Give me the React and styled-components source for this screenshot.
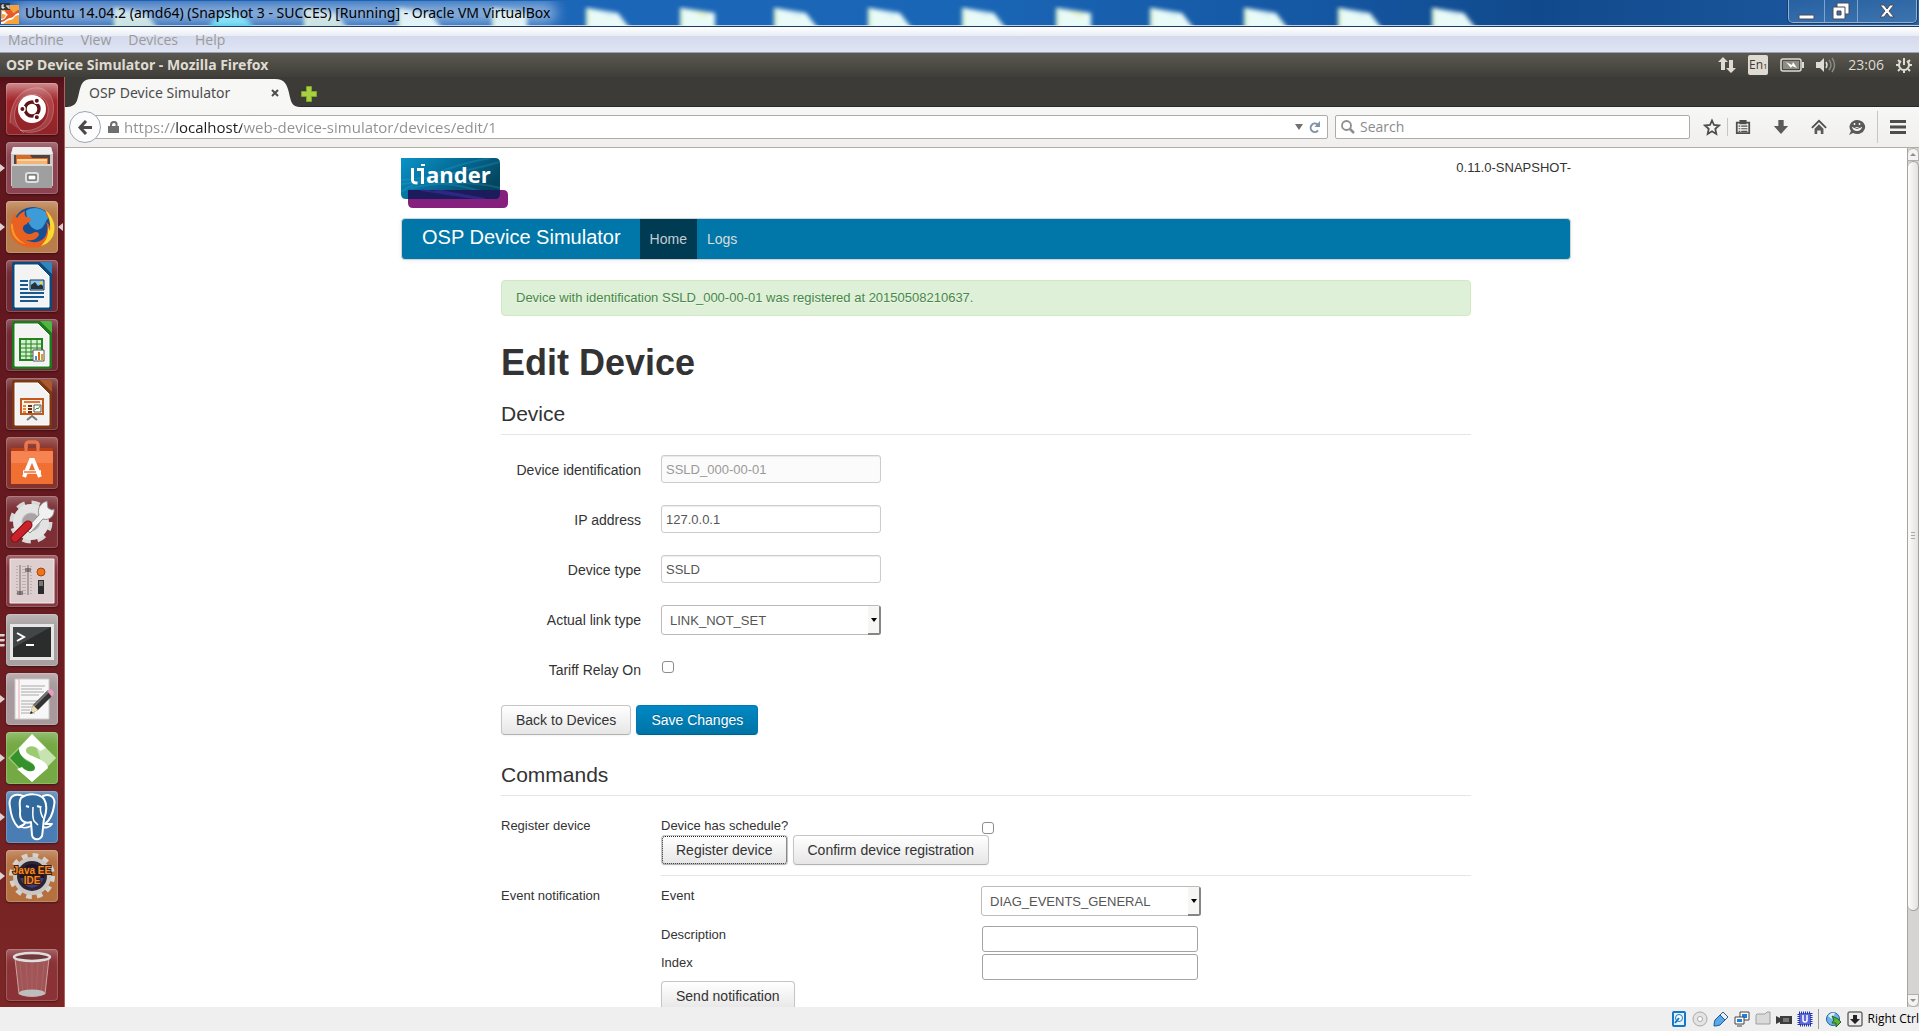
import React from "react";
import styled, { createGlobalStyle, css } from "styled-components";

const ui = '"Open Sans", "Noto Sans", sans-serif';
const uiWide = '"Noto Sans", "Open Sans", sans-serif';
const web = '"Liberation Sans", Arial, sans-serif';

const GlobalStyle = createGlobalStyle`
  *, *::before, *::after { box-sizing: border-box; }
  body { margin: 0; background: #fff; color: #333; font-family: ${web}; overflow: hidden; }
  button, input, select { font-family: inherit; margin: 0; }
  svg { display: block; flex: none; }
`;

/* ---------- host window ---------- */

const Desktop = styled.div`
  display: flex;
  flex-direction: column;
  height: 100vh;
`;

const TitleBar = styled.header`
  position: relative;
  display: flex;
  align-items: center;
  height: 27px;
  overflow: hidden;
  border-bottom: 1px solid #1b3a66;
  box-shadow: inset 0 -1px 0 #b9cfe6;
  background: linear-gradient(90deg, #1d5cb0 0%, #1c66b8 30%, #1a66b6 50%, #1558a4 68%, #114a8c 80%, #1a549a 93%, #2a629f 100%);
`;

const Wallpaper = styled.svg`
  position: absolute;
  left: 0;
  top: 0;
`;

const WindowTitle = styled.h1`
  position: relative;
  flex: 1;
  display: flex;
  align-items: center;
  gap: 5px;
  margin: 0;
  font: 400 14px/26px ${uiWide};
  color: #000;
`;

const WindowButtons = styled.div`
  position: relative;
  align-self: flex-start;
  display: flex;
  height: 23px;
  margin-right: 2px;
  border: 1px solid #8fb0d4;
  border-top: 0;
  border-radius: 0 0 5px 5px;
  box-shadow: 0 0 0 1px #173e6e;
`;

const WindowButton = styled.button`
  width: ${(p) => p.$width}px;
  display: grid;
  place-items: center;
  padding: 0;
  border: 0;
  background: linear-gradient(#3b73ae66, #5a8fc466);
  & + & { border-left: 1px solid #7fa3cb; }
`;

const MenuBar = styled.nav`
  display: flex;
  gap: 17px;
  height: 26px;
  padding-left: 8px;
  font: 14px/26px ${ui};
  border-bottom: 1px solid #9aa4b8;
  background: linear-gradient(#fff 0, #e8ecf5 9px, #d4daec 9px, #e0e5f5 100%);
`;

const MenuLink = styled.a`
  color: #9a9a9a;
  text-decoration: none;
`;

const StatusBar = styled.footer`
  display: flex;
  align-items: center;
  justify-content: flex-end;
  height: 24px;
  gap: 5px;
  background: #efefef;
  font: 12px/24px ${ui};
  color: #000;
`;

const StatusDivider = styled.i`
  width: 1px;
  height: 20px;
  margin-right: 2px;
  background: #9b9b9b;
`;

const HostKey = styled.span`
  white-space: nowrap;
`;

/* ---------- Ubuntu shell ---------- */

const Panel = styled.div`
  display: flex;
  align-items: center;
  justify-content: space-between;
  height: 24px;
  padding: 0 7px 0 6px;
  background: linear-gradient(#5b5850, #3f3e39);
  color: #dfdbd2;
  font: 14px/24px ${ui};
`;

const PanelTitle = styled.strong`
  font-family: ${uiWide};
  font-weight: 700;
`;

const Indicators = styled.div`
  display: flex;
  align-items: center;
  gap: 12px;
`;

const Layout = styled.span`
  display: flex;
  align-items: baseline;
  justify-content: center;
  width: 20px;
  height: 20px;
  border-radius: 2px;
  background: #dfdbd2;
  color: #3c3b37;
  font-size: 12px;
  line-height: 20px;
  small { font-size: 8px; }
`;

const Workspace = styled.div`
  flex: 1;
  min-height: 0;
  display: grid;
  grid-template-columns: 65px minmax(0, 1fr);
`;

const Launcher = styled.nav`
  display: flex;
  flex-direction: column;
  gap: 7px;
  padding: 6px 0;
  border-right: 1px solid #b0625c;
  background: linear-gradient(#531017 0, #5f161d 12px, #661a20 50%, #7c2626);
`;

const LauncherItem = styled.a`
  display: flex;
  align-items: center;
  height: 52px;
  &:last-child { margin-top: auto; }
`;

const Marker = styled.span`
  flex: 0 0 6px;
  display: grid;
  gap: 2px;
`;

const Pip = styled.i`
  height: ${(p) => (p.$small ? 3 : 8)}px;
  width: 5px;
  background: #dcd2d2;
  clip-path: ${(p) => (p.$left ? "polygon(100% 0, 0 50%, 100% 100%)" : p.$small ? "polygon(0 0, 80% 0, 100% 50%, 80% 100%, 0 100%)" : "polygon(0 0, 100% 50%, 0 100%)")};
`;

const Tile = styled.span`
  width: 52px;
  height: 52px;
  border-radius: 4px;
  overflow: hidden;
  background: ${(p) => p.$tone};
  box-shadow: inset 0 0 0 1px #ffffff30, inset 0 12px 12px -8px #ffffff50, 0 1px 2px #0006;
`;

/* ---------- Firefox ---------- */

const Browser = styled.main`
  min-width: 0;
  min-height: 0;
  display: flex;
  flex-direction: column;
`;

const TabStrip = styled.div`
  display: flex;
  align-items: flex-end;
  height: 30px;
  background: #3c3b37;
  border-bottom: 1px solid #2a2927;
`;

const Tab = styled.div`
  display: grid;
  grid-template-columns: minmax(0, 1fr);
  width: 236px;
  height: 28px;
  margin-bottom: -1px;
  > * { grid-area: 1 / 1; }
`;

const TabLabel = styled.div`
  display: flex;
  align-items: center;
  justify-content: space-between;
  padding: 0 22px 0 24px;
  font: 14px/24px ${uiWide};
  color: #4c4c4c;
`;

const IconButton = styled.button`
  display: grid;
  place-items: center;
  width: ${(p) => p.$width || 24}px;
  height: 24px;
  padding: 0;
  border: 0;
  background: none;
`;

const Toolbar = styled.div`
  display: flex;
  align-items: center;
  height: 41px;
  padding: 0 9px 0 4px;
  background: linear-gradient(#f7f7f6, #f0efed);
  border-bottom: 1px solid #b2aea5;
  font: 14px/22px ${ui};
`;

const BackButton = styled.button`
  position: relative;
  z-index: 1;
  display: grid;
  place-items: center;
  width: 32px;
  height: 32px;
  padding: 0;
  border: 1px solid #9aa5b3;
  border-radius: 50%;
  background: #fcfcfc;
`;

const Field = styled.label`
  display: flex;
  align-items: center;
  height: 24px;
  border: 1px solid #adaca8;
  border-radius: 2px;
  background: #fff;
`;

const AddressField = styled(Field)`
  flex: 1;
  margin-left: -14px;
  padding: 0 4px 0 20px;
`;

const SearchField = styled(Field)`
  flex: 0 0 355px;
  margin: 0 10px 0 7px;
  padding-left: 5px;
`;

const AddressInput = styled.input`
  flex: 1;
  min-width: 0;
  margin-left: 5px;
  padding: 0;
  border: 0;
  outline: 0;
  font-size: 15px;
  font-family: inherit;
  color: transparent;
  background: linear-gradient(90deg, #8f8f8f 51px, #1d1d1d 51px, #1d1d1d 118px, #8f8f8f 118px);
  background-clip: text;
  -webkit-background-clip: text;
`;

const SearchInput = styled.input`
  flex: 1;
  min-width: 0;
  padding: 0 5px;
  border: 0;
  outline: 0;
  background: none;
  font: inherit;
  &::placeholder { color: #8b8b8b; opacity: 1; }
`;

const ToolGroup = styled.div`
  display: flex;
  align-items: center;
  gap: ${(p) => p.$gap}px;
`;

const ToolDivider = styled.i`
  width: 1px;
  height: ${(p) => p.$height}px;
  background: #c4c6c9;
`;

const Viewport = styled.div`
  flex: 1;
  min-height: 0;
  display: grid;
  grid-template-columns: minmax(0, 1fr) 12px;
`;

const Page = styled.div`
  overflow: hidden;
  background: #fff;
  font: 13px/20px ${web};
`;

const ScrollBar = styled.div`
  display: flex;
  flex-direction: column;
  align-items: center;
  background: #d5d4d2;
  border-left: 1px solid #a5a4a1;
`;

const ScrollStep = styled.span`
  display: grid;
  place-items: center;
  width: 100%;
  height: 13px;
  background: #f4f3f2;
  border: 1px solid #b0afac;
  border-left: 0;
  border-radius: ${(p) => (p.$down ? "0 0 6px 6px" : "6px 6px 0 0")};
`;

const ScrollTrack = styled.div`
  flex: 1;
  width: 100%;
`;

const ScrollThumb = styled.div`
  display: grid;
  place-content: center;
  gap: 2px;
  height: 90%;
  border: 1px solid #a3a29f;
  border-left: 0;
  border-radius: 6px;
  background: linear-gradient(90deg, #fbfbfb, #e3e2e0);
  i { width: 4px; height: 1px; background: #a9a8a5; }
`;

/* ---------- web page ---------- */

const Container = styled.div`
  width: 1170px;
  max-width: 100%;
  margin: 0 auto;
`;

const Masthead = styled.div`
  display: flex;
  justify-content: space-between;
  height: 70px;
  padding-top: 10px;
`;

const Version = styled.span`
  line-height: 20px;
`;

const NavBar = styled.nav`
  display: flex;
  height: 42px;
  border: 1px solid #d4d4d4;
  border-radius: 4px;
  background: #0077a8;
  box-shadow: 0 1px 4px #00000011;
`;

const Brand = styled.a`
  padding: 0 19px 0 20px;
  font-size: 20px;
  line-height: 36px;
  color: #fff;
  text-decoration: none;
`;

const NavLink = styled.a`
  padding: 0 10px;
  font-size: 14px;
  line-height: 40px;
  text-decoration: none;
  color: #dcdcdc;
  ${(p) => p.$active && css`
    color: #c3cdd2;
    background: #003b54;
  `}
`;

const Content = styled.div`
  margin: 20px 100px 0;
`;

const Alert = styled.p`
  margin: 0 0 27px;
  padding: 7px 14px;
  border: 1px solid #d0e9c0;
  border-radius: 4px;
  background: #dff0d8;
  color: #468847;
  text-shadow: 0 1px 0 #ffffff80;
`;

const Heading = styled.h1`
  margin: 0 0 11px;
  font-size: 36px;
  line-height: 40px;
  color: #333;
`;

const Section = styled.section`
  margin-bottom: 20px;
`;

const Legend = styled.h2`
  margin: 0 0 20px;
  border-bottom: 1px solid #e5e5e5;
  font-size: 21px;
  font-weight: 400;
  line-height: 40px;
`;

const FormRow = styled.div`
  display: grid;
  grid-template-columns: 140px auto;
  justify-content: start;
  align-items: start;
  column-gap: 20px;
  height: 30px;
  margin-bottom: 20px;
`;

const RowLabel = styled.label`
  padding-top: 5px;
  text-align: right;
  font-size: 14px;
`;

const TextInput = styled.input`
  width: 220px;
  height: 28px;
  padding: 0 4px;
  border: 1px solid #ccc;
  border-radius: 3px;
  background: #fff;
  color: #555;
  font-size: 13px;
  box-shadow: inset 0 1px 1px #00000013;
  &:disabled { background: #fbfbfb; color: #999; }
`;

const PlainInput = styled.input`
  width: 216px;
  height: 26px;
  margin: 1px;
  padding: 0 4px;
  border: 1px solid #a5a39f;
  border-radius: 3px;
  background: #fff;
`;

const SelectBox = styled.span`
  position: relative;
  display: block;
  width: 220px;
  height: 30px;
`;

const Select = styled.select`
  appearance: none;
  width: 100%;
  height: 100%;
  padding: 0 20px 0 8px;
  border: 1px solid #bbb;
  border-radius: 3px;
  background: #fff;
  color: #555;
  font-size: 13px;
`;

const SelectArrow = styled.span`
  position: absolute;
  right: 0;
  top: 1px;
  bottom: 0;
  width: 13px;
  display: grid;
  place-items: center;
  border: solid #858585;
  border-width: 0 2px 2px 0;
  border-radius: 0 2px 3px 0;
  background: #f6f6f4;
  pointer-events: none;
  &::before {
    content: "";
    border: 3px solid transparent;
    border-top: 4px solid #000;
    border-bottom: 0;
  }
`;

const CheckBox = styled.input`
  appearance: none;
  display: block;
  width: 12px;
  height: 12px;
  margin: 6px 1px;
  border: 1px solid #8f8d89;
  border-radius: 3px;
  background: #fff;
`;

const ButtonRow = styled.div`
  display: flex;
  gap: 5px;
`;

const Button = styled.button`
  height: 30px;
  padding: 0 14px;
  border: 1px solid #c5c5c5;
  border-bottom-color: #b3b3b3;
  border-radius: 4px;
  background: linear-gradient(#fff, #e6e6e6);
  box-shadow: 0 1px 2px #0000000d;
  color: #333;
  font-size: 14px;
  line-height: 20px;
  white-space: nowrap;
  ${(p) => p.$primary && css`
    border-color: #0077b3 #0077b3 #00608f;
    background: linear-gradient(#0088c4, #0074a6);
    color: #fff;
    text-shadow: 0 -1px 0 #00000040;
  `}
  ${(p) => p.$focused && css`
    outline: 1px dotted #222;
    outline-offset: -2px;
  `}
`;

const Command = styled.div`
  display: grid;
  grid-template-columns: 140px minmax(0, 1fr);
  column-gap: 20px;
`;

const Rule = styled.hr`
  margin: 10px 0;
  border: 0;
  border-top: 1px solid #e5e5e5;
`;

const Option = styled.div`
  display: grid;
  grid-template-columns: 300px minmax(0, 1fr);
  column-gap: 20px;
  align-items: start;
  height: ${(p) => p.$height}px;
`;

/* ---------- drawings ---------- */

const Sheets = () => (
  <Wallpaper width="1919" height="26" aria-hidden="true">
    <defs>
      <filter id="soft"><feGaussianBlur stdDeviation="2" /></filter>
      <filter id="glow"><feGaussianBlur stdDeviation="7" /></filter>
    </defs>
    <g filter="url(#soft)">
      {[115, 305, 399, 493, 587, 681, 775, 869, 963, 1057, 1151, 1245, 1339, 1433].map((x) => {
        const short = [493, 681, 1057].includes(x);
        return (
          <g key={x}>
            <path d={`M${x} 8 L${x + (short ? 34 : 31)} 13 ${short ? "V30" : `L${x + 44} 30`} H${x} Z`} fill={x < 320 ? "#c9e4dc" : "#e9fbf8"} />
            <path d={`M${x + 8} 10 l20 3 l-4 5z`} fill={short ? "#e8f3c2" : "#d8f1f6"} />
            <path d={`M${x + 1} 8 v20`} stroke="#dff5d8" strokeWidth="4" />
          </g>
        );
      })}
      <path d="M208 27 q22 -30 46 0z" fill="#53dcf5" />
    </g>
    <rect x="12" y="3" width="545" height="20" rx="10" fill="#d3e2f6" opacity=".62" filter="url(#glow)" />
  </Wallpaper>
);

const VBoxIcon = () => (
  <svg width="20" height="22" viewBox="0 0 20 22">
    <path d="M1 3h18v19H1z" fill="#f6a33c" />
    <path d="M2 9c5 0 5 4 8 4s4-4 9-4v4c-5 0-5 5-9 5S6 22 1 22v-5c4 0 4-3 5-4-2-1-3-1-4-1z" fill="#fff" />
    <path d="M5 8c4-3 7 0 8 3 2 0 3-3 6-3v3c-4 0-5 5-9 5-3 0-5 4-9 4v-2c5 0 5-5 7-5-2-2-3-3-3-5z" fill="#e65b2c" />
    <path d="M0 1h10v7H0z" fill="#353535" />
    <path d="M4 3H2v3h2V5H2M7 3v2h2M9 3v4" stroke="#fff" fill="none" />
  </svg>
);

const Doc = ({ dark, light, children }) => (
  <>
    <path d="M8 2h26l12 12v34a2 2 0 0 1-2 2H8a2 2 0 0 1-2-2V4a2 2 0 0 1 2-2z" fill={dark} />
    <path d="M34 2h10a2 2 0 0 1 2 2v10z" fill={light} />
    <path d="M9 5h23l11 11v31H9z" fill="#f3f3f3" stroke="#fff" />
    {children}
  </>
);

const launcherIcons = {
  dash: (
    <>
      <path d="M4 40C4 18 16 3 34 5c12 3 16 16 12 30-4 12-20 18-32 12C30 50 44 40 42 24 38 8 20 8 12 20 6 30 8 42 18 50" fill="#ffffff22" stroke="#ffffff40" />
      <circle cx="26" cy="26" r="14" fill="#fff" />
      <circle cx="26" cy="26" r="7" fill="none" stroke="#5f1518" strokeWidth="3.4" />
      <g stroke="#fff" strokeWidth="1.4"><circle cx="16.4" cy="26" r="2.7" fill="#5f1518" /><circle cx="30.8" cy="17.7" r="2.7" fill="#5f1518" /><circle cx="30.8" cy="34.3" r="2.7" fill="#5f1518" /></g>
    </>
  ),
  files: (
    <>
      <path d="M7 5h38l2 7v32H5V12z" fill="#c9c9c9" /><path d="M7 5h38l2 7H5z" fill="#efefef" />
      <path d="M8 13h36v12H8z" fill="#54413a" /><path d="M10 13h14l2 3h16v8H10z" fill="#d96a24" /><path d="M11 17h30v7H11z" fill="#f4b472" /><path d="M11 18h30" stroke="#fff3e0" />
      <path d="M6 22h40v24H6z" fill="#9f9f9f" /><path d="M6 22h40v2H6z" fill="#d9d9d9" />
      <rect x="20" y="31" width="12" height="9" rx="2" fill="#aaa" stroke="#ddd" strokeWidth="2" /><rect x="22" y="33" width="8" height="5" fill="#fff" stroke="#555" />
    </>
  ),
  firefox: (
    <>
      <circle cx="27" cy="26" r="20" fill="#174f95" /><path d="M20 10c8-6 20-2 23 6-5 5-4 12-12 13-8-2-10-10-11-19z" fill="#3d9bd8" />
      <path d="M40 10c12 12 10 28-2 34-12 6-26 2-32-8-4-8-1-18 3-23l2 4c2-4 5-6 8-7-1 3 0 5 1 6 3 0 5 1 5 3-1 2-4 2-4 4-4 1-4 3-4 5 1 5 7 6 10 4 3-2 6-1 6 2-3 5-8 6-13 5 9 5 20 1 21-9 1-4 0-7-1-9 2 1 3 3 4 5 0-6-1-9-4-12z" fill="#e96120" />
      <path d="M39 9c10 8 11 18 8 26-3 6-8 9-12 10 5-5 8-11 7-19l2 4c1-8-1-15-5-21z" fill="#fbd92e" />
      <path d="M5 22c-1 12 6 20 15 21C11 39 7 32 7 24z" fill="#f79a2b" />
    </>
  ),
  writer: (
    <Doc dark="#0b4a7d" light="#2e86bf">
      <path d="M14 21h8m-8 4h8m-8 4h8m-8 4h24m-24 4h24m-24 4h18" stroke="#175a8f" strokeWidth="2" />
      <path d="M24 20h14v10H24z" fill="#8dc7ec" stroke="#163d5a" /><path d="M25 29v-4l4-3 3 4 3-2 2 2v3z" fill="#263238" /><circle cx="35" cy="23" r="1.5" fill="#f8d34a" />
    </Doc>
  ),
  calc: (
    <Doc dark="#197d1b" light="#4cb840">
      <path d="M14 20h22v21H14z" fill="#d6efcf" stroke="#21841f" strokeWidth="2" /><path d="M14 25h22M14 29h22M14 33h22M14 37h22M20 20v21M25 20v21M31 20v21" stroke="#21841f" />
      <path d="M27 31h11v11H27z" fill="#fff" stroke="#555" /><path d="M30 41v-4" stroke="#3a8fd0" strokeWidth="2" /><path d="M33 41v-8" stroke="#e06a1b" strokeWidth="2" /><path d="M36 41v-6" stroke="#d7a324" strokeWidth="2" />
    </Doc>
  ),
  impress: (
    <Doc dark="#7d3713" light="#a95a2e">
      <path d="M15 21h22v15H15z" fill="#fdf1e8" stroke="#c4581e" strokeWidth="2" /><path d="M18 24h16" stroke="#d9783e" strokeWidth="2" />
      <path d="M17 28h3m-3 3h3m-3 3h3" stroke="#e9853e" strokeWidth="2" /><path d="M22 28h4m-4 3h4m-4 3h4" stroke="#6b3116" strokeWidth="2" />
      <path d="M28 27h7v7h-7z" fill="#fff" stroke="#555" /><path d="M29 32l2-2 1 1 2-3" stroke="#2da12e" fill="none" /><path d="M21 42l5-4 5 4" stroke="#777" strokeWidth="2" fill="none" />
    </Doc>
  ),
  software: (
    <>
      <path d="M20 17V8q0-3 3-3h6q3 0 3 3v9" fill="none" stroke="#e8794d" strokeWidth="3" />
      <path d="M5 11h42l-1 5H6z" fill="#b83f16" /><path d="M5 14h42v33H5z" fill="#f06f33" /><path d="M5 14h42v12H5z" fill="#f58450" />
      <path d="M20 15V8q0-3 3-3h6q3 0 3 3v7" fill="none" stroke="#e8794d" strokeWidth="3" />
      <path d="M18 40l7-17h2l7 17" fill="none" stroke="#fff" strokeWidth="4" /><path d="M17 35h18" stroke="#fff" strokeWidth="3.5" /><path d="M18 35h12" stroke="#f06f33" strokeWidth="1.4" />
    </>
  ),
  settings: (
    <>
      <circle cx="25" cy="26" r="18.5" fill="none" stroke="#d8d8d8" strokeWidth="6" strokeDasharray="8 6.53" />
      <circle cx="25" cy="26" r="13" fill="none" stroke="#e3e3e3" strokeWidth="10" /><circle cx="25" cy="26" r="9" fill="#a9a3a3" stroke="#bdbdbd" />
      <path d="M20 33l13-14c-2-6 1-12 8-14l1 7 4 2 2-1c1 7-5 12-11 10L24 37z" fill="#f1f1f1" stroke="#8c8c8c" />
      <path d="M9 42l13-13" stroke="#7f0e14" strokeWidth="9" strokeLinecap="round" /><path d="M9 42l13-13" stroke="#c9222b" strokeWidth="7" strokeLinecap="round" />
    </>
  ),
  mixer: (
    <>
      <path d="M4 4h44v44H4z" fill="#ddced0" stroke="#f5eaea" /><path d="M14 10v30m8-30v30" stroke="#7d6e70" />
      <path d="M11 11v30m6-30v30m2-30v30m6-30v30" stroke="#9d8f91" strokeDasharray="1 2" />
      <path d="M11 37h6m-6 2h6M19 14h6m-6 2h6" stroke="#3c3435" /><circle cx="35" cy="17" r="4" fill="#f27316" stroke="#a5450f" />
      <path d="M32 25h6v14h-6z" fill="#2b2b2b" /><path d="M33 26h4v5h-4z" fill="#777" />
    </>
  ),
  terminal: (
    <>
      <path d="M4 10h44v36H4z" fill="#e6e6e6" /><path d="M7 13h38v30H7z" fill="#2b2d2d" /><path d="M7 13h38L7 34z" fill="#434646" />
      <path d="M11 19l7 4-7 4" fill="none" stroke="#fff" strokeWidth="2" /><path d="M20 31h8" stroke="#fff" strokeWidth="2" />
    </>
  ),
  editor: (
    <>
      <path d="M9 6h34v40H9z" fill="#f7f7f7" stroke="#ccc" /><path d="M13 6v40" stroke="#eaa" /><path d="M15 13h24m-24 3h21m-21 3h23m-23 3h18m-18 6h22m-22 3h16m-16 3h12m-12 3h9m-9 3h14" stroke="#a9a9a9" />
      <path d="M24 41l3-9L42 17l5 5-15 15z" fill="#333" /><path d="M28 33L43 18" stroke="#777" strokeWidth="2" /><path d="M24 41l3-9 5 5z" fill="#eadfae" /><path d="M24 41l1-3 2 2z" fill="#222" /><path d="M41 18l3-2q4 1 4 5l-2 3z" fill="#e79cc0" />
    </>
  ),
  soap: (
    <>
      <path d="M26 2l24 24-24 24L2 26z" fill="#9ccb74" /><path d="M26 2l24 24-12 12z" fill="#c7e3b0" /><path d="M4 26l11-11q-3 10 8 15t5 14l-3 4z" fill="#34912c" />
      <path d="M26 2l14 14-6 3c-4-6-13-6-14-1-1 7 20 7 22 18l-16 14-15-13 5-2c5 6 13 5 13 1C29 28 12 28 13 16z" fill="#fff" />
    </>
  ),
  elephant: (
    <g fill="#336a9e" stroke="#fff" strokeWidth="2" strokeLinejoin="round">
      <path d="M37 5c8-3 13 2 11 10-1 7-4 14-9 18h7c-3 4-7 4-9 3l-3-20z" /><path d="M17 5C7 1 2 7 4 16c1 9 4 16 8 20 3 2 6-3 9-6z" />
      <path d="M15 7c7-5 18-5 23 1 3 5 3 12 0 20-1 6-1 12-2 17-3 5-9 4-10-1l-1-13c-6 2-11-1-11-8 1-6-2-11 1-16z" /><path d="M19 33l-5 2c2 2 5 3 11 0M27 16c0 5-1 9 1 14l4 4M35 15c-2 4 0 8 2 12" fill="none" strokeWidth="1.5" /><path d="M20 15l3 1m8-1l3 1" />
    </g>
  ),
  eclipse: (
    <>
      <circle cx="26" cy="26" r="20" fill="none" stroke="#d6d1cd" strokeWidth="6" strokeDasharray="5.5 4.97" /><circle cx="26" cy="26" r="17" fill="#2b2433" stroke="#c9c6c4" strokeWidth="4" />
      <circle cx="26" cy="26" r="12" fill="#191330" /><path d="M14 28h24q-3 9-12 10-9-1-12-10z" fill="#443a78" />
      <g fontFamily="Liberation Sans, sans-serif" fontWeight="700" fontSize="10" textAnchor="middle" fill="#f58a2c" stroke="#3a1c08" strokeWidth="2" paintOrder="stroke"><text x="26" y="24">Java EE</text><text x="26" y="34">IDE</text></g>
    </>
  ),
  trash: (
    <>
      <path d="M9 9h34l-4 36q-13 5-26 0z" fill="#c58a8a66" stroke="#c9a3a3" /><path d="M14 14l3 30m3-30l2 31m4-31v31m6-31l-2 31m8-31l-3 30" stroke="#d9b1b122" />
      <ellipse cx="26" cy="44" rx="13" ry="3.5" fill="#bdbdbd" /><ellipse cx="26" cy="8" rx="18" ry="4" fill="#71393c" stroke="#dedede" strokeWidth="2.5" />
    </>
  ),
};

const apps = [
  ["dash", "Search your computer", "linear-gradient(#c0696c, #a3262b 35%, #8f2428)"],
  ["files", "Files", "#8d4450", 1],
  ["firefox", "Firefox Web Browser", "#b97c4a", 1, true],
  ["writer", "LibreOffice Writer", "#6f2a35"],
  ["calc", "LibreOffice Calc", "#6f2a35"],
  ["impress", "LibreOffice Impress", "#6f2a2b"],
  ["software", "Ubuntu Software Center", "#86322c"],
  ["settings", "System Settings", "#7c3036"],
  ["mixer", "Unity Tweak Tool", "#85383f"],
  ["terminal", "Terminal", "#a9a1a1", 3],
  ["editor", "Text Editor", "#a89a9c", 1],
  ["soap", "SoapUI", "#74a943", 1],
  ["elephant", "pgAdmin", "#4a7db3", 1],
  ["eclipse", "Eclipse", "#b5703f", 1],
  ["trash", "Trash", "#8a3236"],
];

const TabShape = () => (
  <svg width="236" height="28" viewBox="0 0 236 28" aria-hidden="true">
    <path d="M0 28C12 28 12 22 14 14S17 0 27 0H210C220 0 222 6 224 14S226 28 236 28Z" fill="#f7f7f6" />
  </svg>
);

const Glyph = ({ size = 18, children }) => (
  <svg width={size} height={size} viewBox="0 0 18 18" fill="none" stroke="#4d4d4d" strokeWidth="2">{children}</svg>
);

const StatusIcon = ({ children }) => <svg width="16" height="16" viewBox="0 0 16 16">{children}</svg>;

/* ---------- parts ---------- */

const DropDown = ({ id, value }) => (
  <SelectBox>
    <Select id={id} defaultValue={value}>
      <option>{value}</option>
    </Select>
    <SelectArrow />
  </SelectBox>
);

const DeviceForm = () => (
  <Section>
    <Legend>Device</Legend>
    <FormRow><RowLabel htmlFor="ident">Device identification</RowLabel><TextInput id="ident" defaultValue="SSLD_000-00-01" disabled /></FormRow>
    <FormRow><RowLabel htmlFor="ip">IP address</RowLabel><TextInput id="ip" defaultValue="127.0.0.1" /></FormRow>
    <FormRow><RowLabel htmlFor="type">Device type</RowLabel><TextInput id="type" defaultValue="SSLD" /></FormRow>
    <FormRow><RowLabel htmlFor="link">Actual link type</RowLabel><DropDown id="link" value="LINK_NOT_SET" /></FormRow>
    <FormRow><RowLabel htmlFor="tariff">Tariff Relay On</RowLabel><CheckBox id="tariff" type="checkbox" /></FormRow>
    <ButtonRow><Button>Back to Devices</Button><Button $primary>Save Changes</Button></ButtonRow>
  </Section>
);

const Commands = () => (
  <Section>
    <Legend>Commands</Legend>
    <Command>
      <span>Register device</span>
      <div>
        <Option $height={19}><label htmlFor="schedule">Device has schedule?</label><CheckBox id="schedule" type="checkbox" /></Option>
        <ButtonRow><Button $focused>Register device</Button><Button>Confirm device registration</Button></ButtonRow>
        <Rule />
      </div>
      <span>Event notification</span>
      <div>
        <Option $height={39}><label htmlFor="event">Event</label><DropDown id="event" value="DIAG_EVENTS_GENERAL" /></Option>
        <Option $height={28}><label htmlFor="desc">Description</label><PlainInput id="desc" /></Option>
        <Option $height={28}><label htmlFor="index">Index</label><PlainInput id="index" /></Option>
        <ButtonRow><Button>Send notification</Button></ButtonRow>
      </div>
    </Command>
  </Section>
);

const LianderLogo = () => (
  <svg width="107" height="50" viewBox="0 0 107 50" role="img" aria-label="Liander">
    <defs>
      <linearGradient id="sea" x1="0" y1="0" x2="1" y2=".5"><stop offset="0" stopColor="#0a93c8" /><stop offset=".55" stopColor="#046a94" /><stop offset="1" stopColor="#04455f" /></linearGradient>
      <clipPath id="plate"><path d="M0 0h94q5 0 5 5v31q0 5-5 5H5q-5 0-5-5z" /></clipPath>
    </defs>
    <path d="M7 32h95q5 0 5 5v8q0 5-5 5H12q-5 0-5-5z" fill="#86207f" />
    <path d="M0 0h94q5 0 5 5v31q0 5-5 5H5q-5 0-5-5z" fill="url(#sea)" />
    <g clipPath="url(#plate)">
      <path d="M0 22Q40 20 99 4M0 26Q50 20 99 40M0 34Q40 8 90 0M10 30Q60 20 99 30" stroke="#39b2dd" strokeOpacity=".22" strokeWidth="2" fill="none" />
      <path d="M7 32h92v9H7z" fill="#1c1c5c" />
      <path d="M20 32l60 9M34 32l50 9" stroke="#37309c" strokeOpacity=".6" strokeWidth="2" />
    </g>
    <path d="M11.500 10v12q0 3 5 3" stroke="#fff" strokeWidth="3" fill="none" />
    <path d="M16 11.500h5.500V26" stroke="#fff" strokeWidth="3" fill="none" />
    <path d="M20 7h4" stroke="#fff" strokeWidth="2" />
    <text x="25" y="25" fill="#fff" fontFamily="Open Sans, sans-serif" fontWeight="700" fontSize="22">ander</text>
  </svg>
);

export default function App() {
  return (
    <Desktop>
      <GlobalStyle />
      <TitleBar>
        <Sheets />
        <WindowTitle><VBoxIcon />Ubuntu 14.04.2 (amd64) (Snapshot 3 - SUCCES) [Running] - Oracle VM VirtualBox</WindowTitle>
        <WindowButtons>
          <WindowButton $width={35} aria-label="Minimise"><svg width="17" height="18"><path d="M1 13h15v4H1z" fill="#fff" stroke="#4b4b5a" /></svg></WindowButton>
          <WindowButton $width={33} aria-label="Restore"><svg width="18" height="18"><path d="M5 1h12v11H5z" fill="#fff" stroke="#4b4b5a" /><path d="M1 5h12v12H1z" fill="#fff" stroke="#4b4b5a" /><path d="M5 9h4v4H5z" fill="#3b6ca6" stroke="#4b4b5a" /></svg></WindowButton>
          <WindowButton $width={59} aria-label="Close"><svg width="16" height="14"><path d="M1 1h4l3 4 3-4h4l-5 6 5 6h-4L8 9l-3 4H1l5-6z" fill="#fff" stroke="#4b4b5a" /></svg></WindowButton>
        </WindowButtons>
      </TitleBar>
      <MenuBar>
        {["Machine", "View", "Devices", "Help"].map((m) => <MenuLink key={m} href="#">{m}</MenuLink>)}
      </MenuBar>
      <Panel>
        <PanelTitle>OSP Device Simulator - Mozilla Firefox</PanelTitle>
        <Indicators>
          <svg width="18" height="18" viewBox="0 0 18 18" fill="#dfdbd2"><path d="M5 1l5 5H7v8H3V6H0zM13 17L8 12h3V4h4v8h3z" /></svg>
          <Layout>En<small>1</small></Layout>
          <svg width="24" height="14" viewBox="0 0 24 14"><rect x="1" y="1" width="20" height="12" rx="2" fill="none" stroke="#dfdbd2" strokeWidth="1.5" /><path d="M3 3h16v8H3z" fill="#8f8c85" /><path d="M22 4h2v6h-2z" fill="#dfdbd2" /><path d="M6 4l6 3 1-3 4 6-5-2-1 2z" fill="#fff" /></svg>
          <svg width="20" height="18" viewBox="0 0 20 18"><path d="M0 6h4l4-4v14l-4-4H0z" fill="#dfdbd2" /><path d="M10 6q2 3 0 6" stroke="#dfdbd2" strokeWidth="1.5" fill="none" /><path d="M13 4q4 5 0 10M16 2q5 7 0 14" stroke="#8c8981" strokeWidth="1.5" fill="none" /></svg>
          <time>23:06</time>
          <svg width="16" height="16" viewBox="0 0 16 16" fill="none" stroke="#dfdbd2"><path d="M5 4a5 5 0 1 0 6 0" strokeWidth="2" /><path d="M8 1v7" strokeWidth="2" /><path d="M0 8h3m10 0h3M2 3l2 2m10-2l-2 2M2 14l2-2m10 2l-2-2M8 13v3" strokeWidth="2" /></svg>
        </Indicators>
      </Panel>
      <Workspace>
        <Launcher>
          {apps.map(([key, name, tone, pips, focused]) => (
            <LauncherItem key={key} href="#" aria-label={name}>
              <Marker>{Array.from({ length: pips || 0 }, (_, i) => <Pip key={i} $small={pips > 1} />)}</Marker>
              <Tile $tone={tone}><svg width="52" height="52" viewBox="0 0 52 52">{launcherIcons[key]}</svg></Tile>
              <Marker>{focused && <Pip $left />}</Marker>
            </LauncherItem>
          ))}
        </Launcher>
        <Browser>
          <TabStrip>
            <Tab>
              <TabShape />
              <TabLabel>OSP Device Simulator<IconButton $width={8} aria-label="Close tab"><svg width="8" height="8"><path d="M1 1l6 6M7 1L1 7" stroke="#4d4d4d" strokeWidth="2" /></svg></IconButton></TabLabel>
            </Tab>
            <IconButton aria-label="New tab" $width={16}><svg width="16" height="16"><path d="M5.500 .5h5v5h5v5h-5v5h-5v-5h-5v-5h5z" fill="#a9d040" stroke="#7da52a" /></svg></IconButton>
          </TabStrip>
          <Toolbar>
            <BackButton aria-label="Back"><svg width="15" height="15" viewBox="0 0 15 15" fill="none" stroke="#4a4a4a" strokeWidth="3"><path d="M8 1L2 7.500 8 14M2 7.500h12" /></svg></BackButton>
            <AddressField>
              <svg width="11" height="12" viewBox="0 0 11 12"><path d="M0 5h11v7H0z" fill="#6f6f6f" /><path d="M3 6V4q0-3 3-3t2.500 3v2" stroke="#6f6f6f" strokeWidth="2" fill="none" /></svg>
              <AddressInput aria-label="Address" defaultValue="https://localhost/web-device-simulator/devices/edit/1" />
              <IconButton $width={16} aria-label="History"><svg width="8" height="6"><path d="M0 0h8L4 6z" fill="#707070" /></svg></IconButton>
              <IconButton $width={16} aria-label="Reload"><svg width="12" height="13" viewBox="0 0 12 13"><path d="M9 9.500A4.200 4.200 0 1 1 8.500 3.500" stroke="#7f94a8" strokeWidth="2" fill="none" /><path d="M11 0v6H5.500z" fill="#7f94a8" /></svg></IconButton>
            </AddressField>
            <SearchField>
              <svg width="14" height="14" viewBox="0 0 14 14" fill="none" stroke="#8d8d8d"><circle cx="5.5" cy="5.5" r="4.5" strokeWidth="1.8" /><path d="M9 9l4 4" strokeWidth="2.5" /></svg>
              <SearchInput aria-label="Search" placeholder="Search" />
            </SearchField>
            <ToolGroup $gap={14}>
              <ToolGroup $gap={3}>
                <IconButton aria-label="Bookmark"><Glyph><path d="M9 2.500l2 4.500 5 .5-3.700 3.400 1 5L9 13.300l-4.300 2.600 1-5L2 7.500 7 7z" strokeWidth="1.8" /></Glyph></IconButton>
                <ToolDivider $height={18} />
                <IconButton aria-label="Bookmarks list"><Glyph size={16}><path d="M2 4h14v12H2z" /><path d="M6 2h6v3H6z" fill="#4d4d4d" /><path d="M4 8h2m1 0h7M4 11h2m1 0h7M4 14h2m1 0h7" strokeWidth="1.3" /></Glyph></IconButton>
              </ToolGroup>
              <IconButton aria-label="Downloads"><Glyph size={16}><path d="M6 1h6v7h5l-8 9-8-9h5z" fill="#5a5a5a" stroke="none" /></Glyph></IconButton>
              <IconButton aria-label="Home page"><Glyph size={16}><path d="M1 10l8-8 8 8" /><path d="M4 11l5-5 5 5v6h-3v-4H7v4H4z" fill="#5a5a5a" stroke="none" /></Glyph></IconButton>
              <ToolGroup $gap={8}>
                <IconButton aria-label="Chat"><Glyph><path d="M9 2a8 7 0 1 1-4 13l-4 2 2-4A8 7 0 0 1 9 2z" fill="#5a5a5a" stroke="none" /><path d="M4 9h10q-1 4-5 4T4 9z" fill="#f5f5f4" stroke="none" /><path d="M5 9q4 3 8 0" stroke="#5a5a5a" strokeWidth="1" /><path d="M6.500 5v2m5-2v2" stroke="#f5f5f4" strokeWidth="1.500" /></Glyph></IconButton>
                <ToolDivider $height={32} />
                <IconButton aria-label="Menu"><svg width="16" height="14"><path d="M0 1.500h16M0 7h16M0 12.500h16" stroke="#4d4d4d" strokeWidth="3" /></svg></IconButton>
              </ToolGroup>
            </ToolGroup>
          </Toolbar>
          <Viewport>
            <Page>
              <Container>
                <Masthead><LianderLogo /><Version>0.11.0-SNAPSHOT-</Version></Masthead>
                <NavBar><Brand href="#">OSP Device Simulator</Brand><NavLink href="#" $active>Home</NavLink><NavLink href="#">Logs</NavLink></NavBar>
                <Content>
                  <Alert role="status">Device with identification SSLD_000-00-01 was registered at 20150508210637.</Alert>
                  <Heading>Edit Device</Heading>
                  <DeviceForm />
                  <Commands />
                </Content>
              </Container>
            </Page>
            <ScrollBar>
              <ScrollStep><svg width="6" height="3"><path d="M0 3h6L3 0z" fill="#8f8f8f" /></svg></ScrollStep>
              <ScrollTrack><ScrollThumb><i /><i /><i /></ScrollThumb></ScrollTrack>
              <ScrollStep $down><svg width="6" height="3"><path d="M0 0h6L3 3z" fill="#8f8f8f" /></svg></ScrollStep>
            </ScrollBar>
          </Viewport>
        </Browser>
      </Workspace>
      <StatusBar>
        <StatusIcon><rect x="2" y="1" width="12" height="14" rx="1" fill="#e6f3fd" stroke="#1478c8" strokeWidth="2" /><circle cx="8" cy="7" r="3.5" fill="#fff" stroke="#1478c8" /><path d="M8 7l-4 5" stroke="#1478c8" strokeWidth="2" /></StatusIcon>
        <StatusIcon><circle cx="8" cy="8" r="7" fill="#e4e4e4" stroke="#a9a9a9" /><circle cx="8" cy="8" r="2.5" fill="#fff" stroke="#a9a9a9" /></StatusIcon>
        <StatusIcon><path d="M10 1l5 5-3 3-5-5z" fill="#e8eef4" stroke="#3b5d7d" /><path d="M7 4l5 5-5 5q-3 1-6 1 0-3 1-6z" fill="#5aa9e6" stroke="#175a9b" /></StatusIcon>
        <StatusIcon><path d="M6 1h9v8H6z" fill="#fff" stroke="#444" /><path d="M8 3h5v4H8z" fill="#1f7fe0" /><path d="M1 6h9v7H1z" fill="#fff" stroke="#444" /><path d="M3 8h5v3H3z" fill="#1f7fe0" /><path d="M3 15h5" stroke="#444" /></StatusIcon>
        <StatusIcon><path d="M1 13V4l1-1h8l2-2h3v12z" fill="#dadada" stroke="#9f9f9f" /></StatusIcon>
        <StatusIcon><path d="M0 5l4 2V5h12v8H4v-2l-4 2z" fill="#3d3d3d" /><path d="M7 7h6v4H7z" fill="#777" /></StatusIcon>
        <StatusIcon><rect x="2" y="2" width="12" height="12" fill="#5a68d8" stroke="#2636a8" strokeDasharray="1 1" strokeWidth="3" /><path d="M3 3h10v10H3z" fill="#5a68d8" /><path d="M6 4v5q0 2 2 2t2-2V4" stroke="#fff" strokeWidth="1.5" fill="none" /></StatusIcon>
        <StatusDivider />
        <StatusIcon><circle cx="7" cy="8" r="6.5" fill="#6db5ea" stroke="#245c97" /><path d="M2 5q4-5 7-3l-3 6z" fill="#d9eefb" /><path d="M6 5l6 3 3 3-5 5v-4H6l2-3z" fill="#5fb531" stroke="#20631a" /></StatusIcon>
        <StatusIcon><rect x="1" y="1" width="14" height="14" rx="2" fill="#ececec" stroke="#6d6d6d" strokeWidth="1.5" /><path d="M6 4h4v4h3l-5 5-5-5h3z" fill="#222" /></StatusIcon>
        <HostKey>Right Ctrl</HostKey>
      </StatusBar>
    </Desktop>
  );
}
